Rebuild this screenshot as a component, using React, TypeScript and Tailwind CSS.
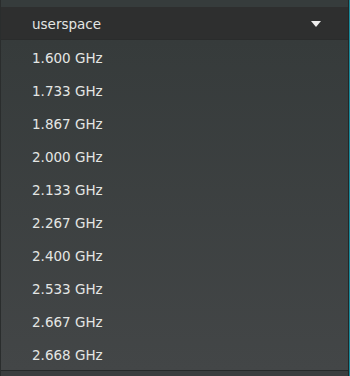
const FREQS = [
  "1.600 GHz",
  "1.733 GHz",
  "1.867 GHz",
  "2.000 GHz",
  "2.133 GHz",
  "2.267 GHz",
  "2.400 GHz",
  "2.533 GHz",
  "2.667 GHz",
  "2.668 GHz",
];

export default function App() {
  return (
    <div
      className="w-[350px] h-[376px] overflow-hidden flex bg-[#2f3333] text-[13.5px] text-[#e4e6e4]"
      style={{ fontFamily: '"DejaVu Sans", sans-serif' }}
    >
      <div className="flex-1 flex flex-col border-l border-[#2a2d2d] border-r border-r-[#232626]">
        {/* top strip */}
        <div className="h-[7px] bg-[#363c3c]" />

        {/* selected governor */}
        <div className="h-[33px] flex items-center justify-between pt-[3px] pl-[31px] pr-[27px] bg-[#2e2f2f] border-b border-[#2a2c2c]">
          <span>userspace</span>
          <svg width="10" height="6" viewBox="0 0 10 6" className="-mt-[2px]">
            <path d="M0 0h10L5 6z" fill="#ededed" />
          </svg>
        </div>

        {/* frequency list */}
        <div className="flex flex-col bg-gradient-to-b from-[#363b3b] to-[#434647] border-b border-[#262929]">
          {FREQS.map((f) => (
            <div key={f} className="h-[33px] flex items-center pt-[3px] pl-[31px]">
              {f}
            </div>
          ))}
        </div>
        <div className="flex-1 bg-[#3a3d3e]" />
      </div>
      <div className="w-px bg-[#1a8a9b]" />
    </div>
  );
}
